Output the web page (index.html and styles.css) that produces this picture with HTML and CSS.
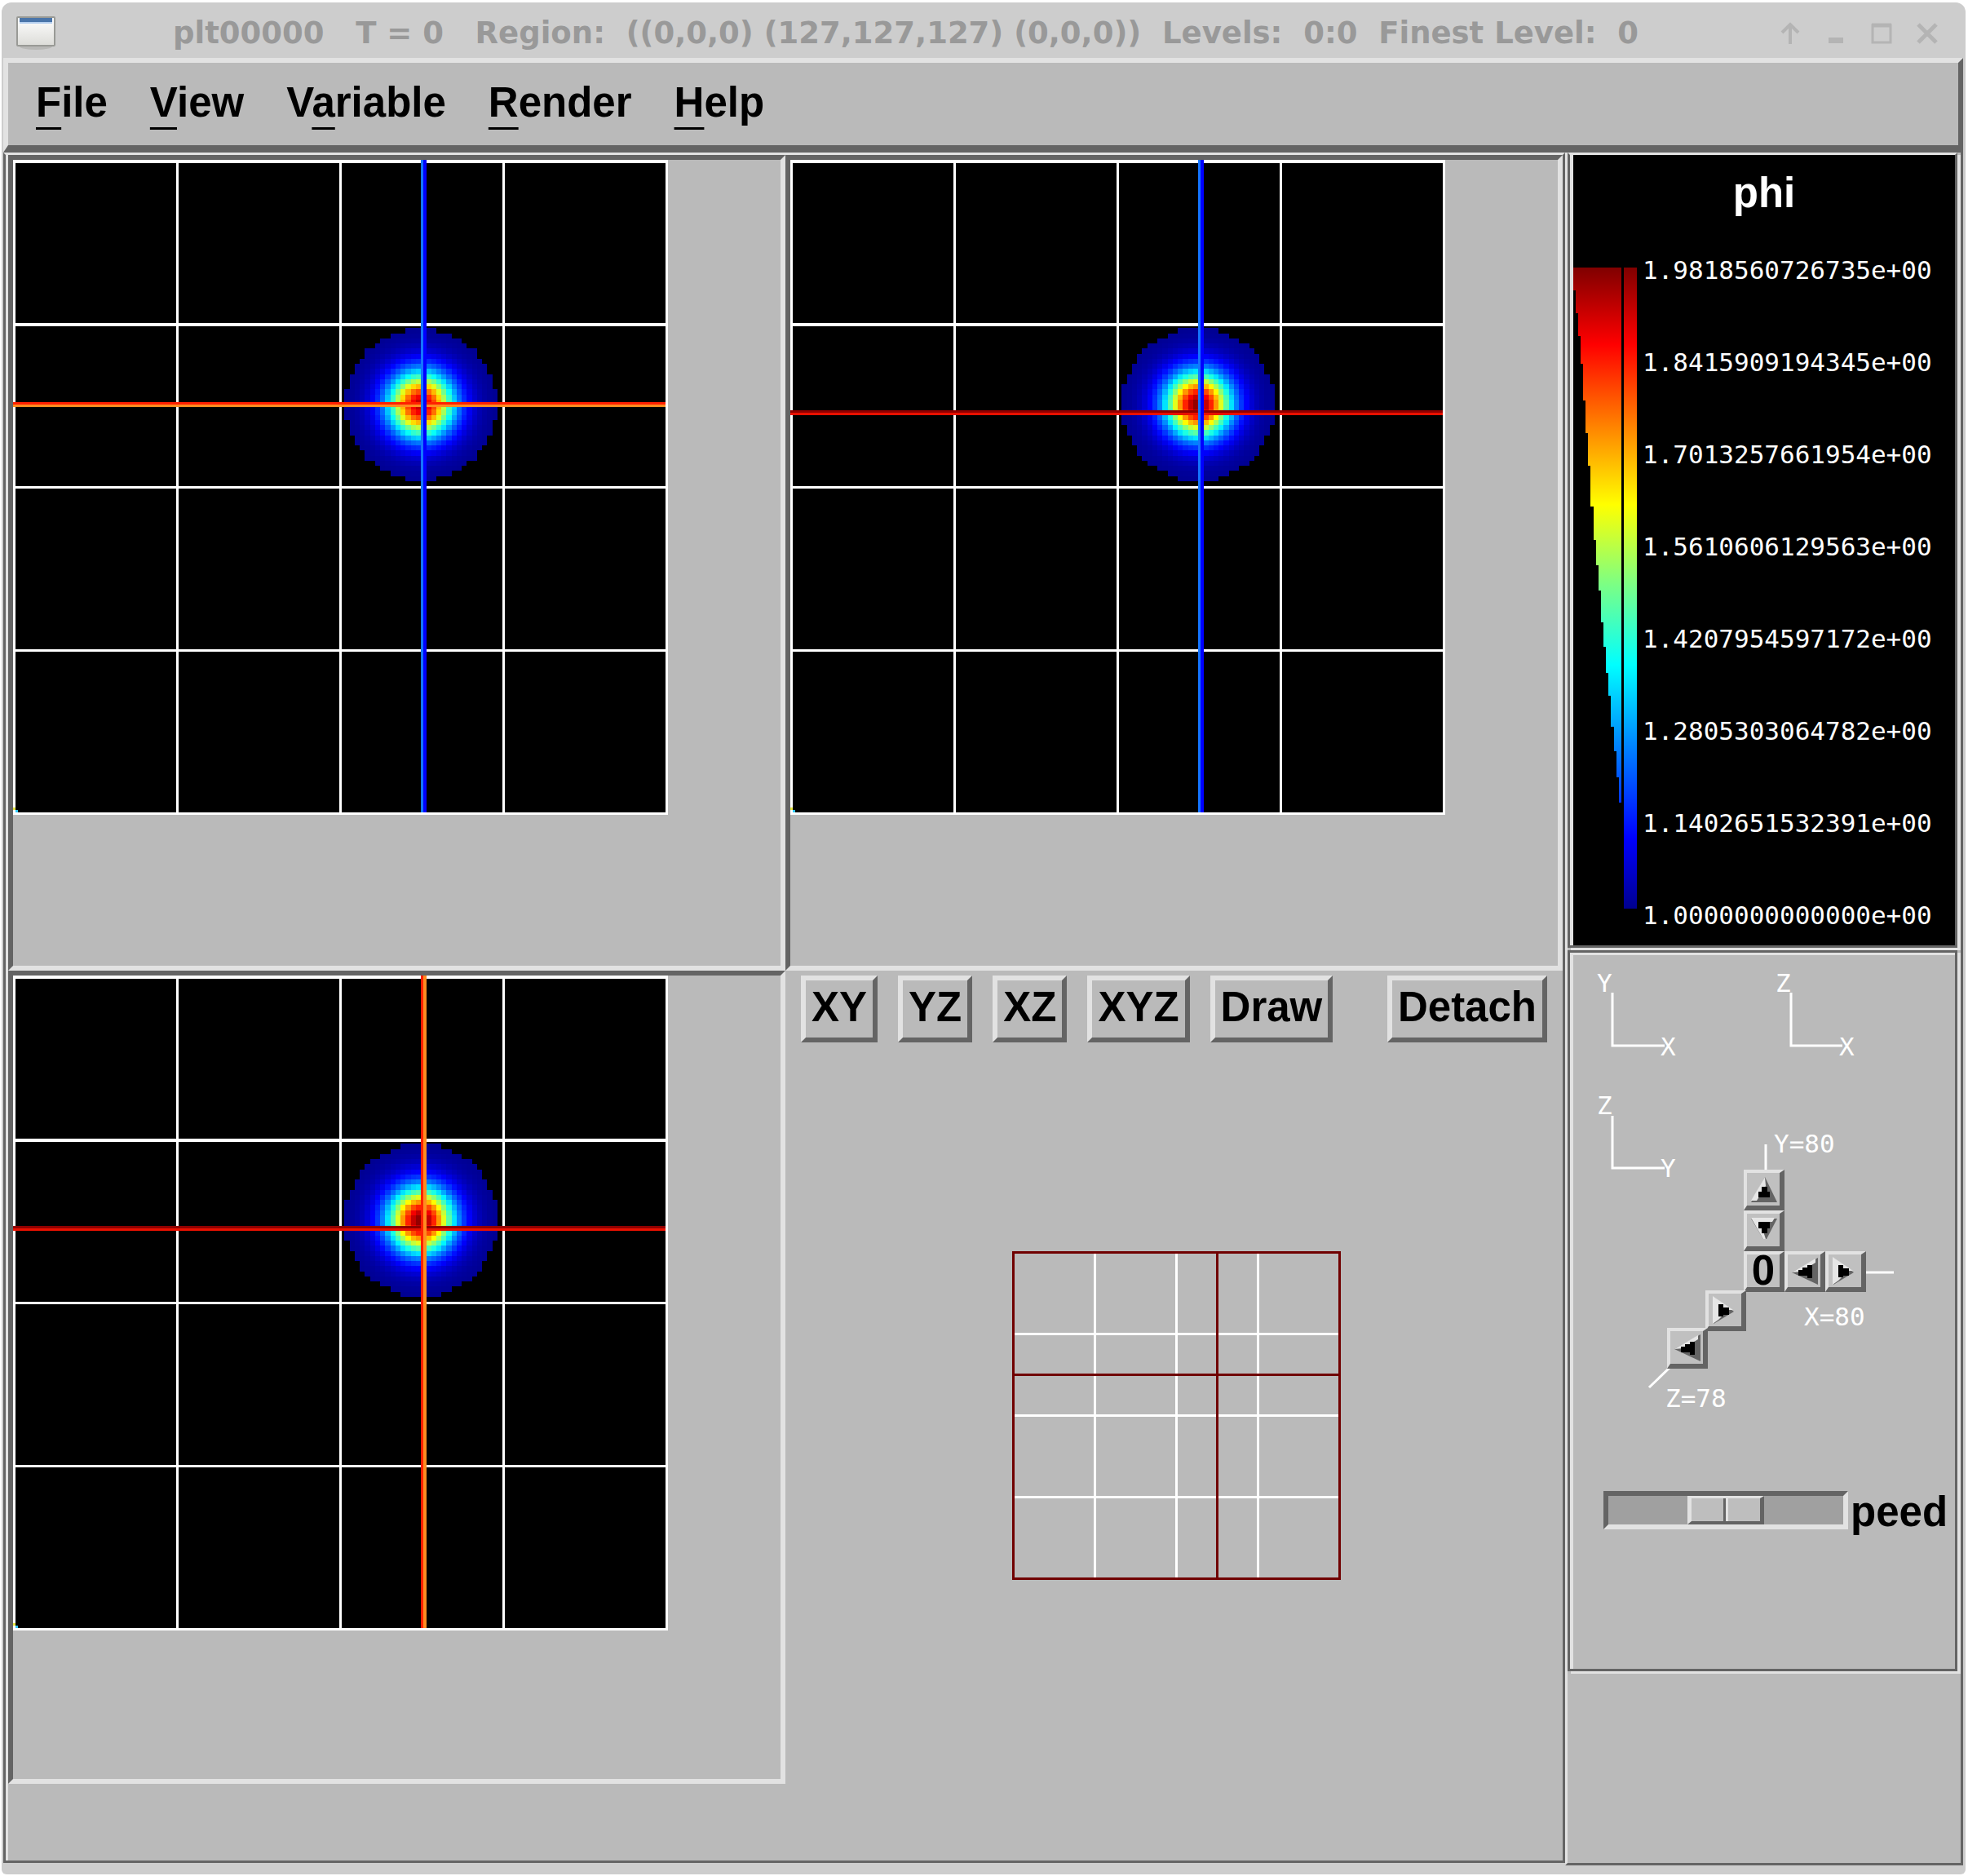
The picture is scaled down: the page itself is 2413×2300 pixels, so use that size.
FILE: index.html
```html
<!DOCTYPE html>
<html lang="en">
<head>
<meta charset="utf-8">
<title>plt00000</title>
<link rel="stylesheet" href="styles.css">
</head>
<body>
<div class="window">
  <header class="titlebar">
    <svg class="app-icon" width="48" height="42" viewBox="0 0 48 42" aria-hidden="true">
      <defs><linearGradient id="sheet" x1="0" y1="0" x2="0" y2="1"><stop offset="0" stop-color="#fff"/><stop offset="1" stop-color="#dcdcd8"/></linearGradient></defs>
      <ellipse cx="24" cy="37" rx="20" ry="4" fill="#b8b8b6"/>
      <rect x="1" y="1" width="46" height="35" rx="1" fill="url(#sheet)" stroke="#999a96" stroke-width="2"/>
      <rect x="4" y="2" width="40" height="5" fill="#4a75aa"/>
      <rect x="4" y="7" width="40" height="2" fill="#b6d0f0"/>
    </svg>
    <h1 class="title">plt00000   T = 0   Region:  ((0,0,0) (127,127,127) (0,0,0))  Levels:  0:0  Finest Level:  0</h1>
    <div class="window-buttons">
      <button class="window-button" aria-label="Shade"><svg width="28" height="28" viewBox="0 0 28 28"><path d="M14 27V3M4 13L14 3L24 13" fill="none" stroke="#b4b4b4" stroke-width="4"/></svg></button>
      <button class="window-button" aria-label="Minimize"><svg width="28" height="28" viewBox="0 0 28 28"><path d="M5 19h18v7H5z" fill="#b4b4b4"/></svg></button>
      <button class="window-button" aria-label="Maximize"><svg width="28" height="28" viewBox="0 0 28 28"><path d="M3 4h22v21H3z" fill="none" stroke="#b4b4b4" stroke-width="3"/><path d="M2 4h24" stroke="#b4b4b4" stroke-width="5"/></svg></button>
      <button class="window-button" aria-label="Close"><svg width="28" height="28" viewBox="0 0 28 28"><path d="M3 3L25 25M25 3L3 25" stroke="#b4b4b4" stroke-width="5"/></svg></button>
    </div>
  </header>

  <nav class="menubar">
    <button class="menu"><u>F</u>ile</button>
    <button class="menu"><u>V</u>iew</button>
    <button class="menu">V<u>a</u>riable</button>
    <button class="menu"><u>R</u>ender</button>
    <button class="menu"><u>H</u>elp</button>
  </nav>

  <div class="workspace">
    <main class="views">
      <section class="pane"><canvas class="slice" width="803" height="803" data-view="xy"></canvas></section>
      <section class="pane"><canvas class="slice" width="803" height="803" data-view="xz"></canvas></section>
      <section class="pane"><canvas class="slice" width="803" height="803" data-view="yz"></canvas></section>
      <section class="volume">
        <div class="toolbar">
          <button class="tool">XY</button>
          <button class="tool">YZ</button>
          <button class="tool">XZ</button>
          <button class="tool">XYZ</button>
          <button class="tool">Draw</button>
          <button class="tool detach">Detach</button>
        </div>
        <svg class="wireframe" width="403" height="403" viewBox="0 0 403 403" shape-rendering="crispEdges">
          <g fill="#fff">
            <rect x="100" width="3" height="403"/><rect x="200" width="3" height="403"/><rect x="300" width="3" height="403"/>
            <rect y="100" width="403" height="3"/><rect y="200" width="403" height="3"/><rect y="300" width="403" height="3"/>
          </g>
          <g fill="#700000">
            <rect x="250" width="3" height="403"/><rect y="150" width="403" height="3"/>
            <rect width="403" height="3"/><rect y="400" width="403" height="3"/>
            <rect width="3" height="403"/><rect x="400" width="3" height="403"/>
          </g>
        </svg>
      </section>
    </main>

    <aside class="side">
      <section class="panel legend">
        <h2 class="variable">phi</h2>
        <div class="scale">
          <svg class="palette" width="78" height="786" viewBox="0 0 78 786" shape-rendering="crispEdges">
            <defs>
              <linearGradient id="jet" gradientUnits="userSpaceOnUse" x1="0" y1="0" x2="0" y2="786">
                <stop offset="0" stop-color="#800000"/><stop offset=".12" stop-color="#f00"/>
                <stop offset=".245" stop-color="#ff8000"/><stop offset=".37" stop-color="#ff0"/>
                <stop offset=".49" stop-color="#80ff80"/><stop offset=".62" stop-color="#0ff"/>
                <stop offset=".75" stop-color="#0080ff"/><stop offset=".89" stop-color="#00f"/>
                <stop offset="1" stop-color="#00008f"/>
              </linearGradient>
            </defs>
            <path fill="url(#jet)" d="M0 0H59V656H56V625H53V593H50V563H46V525H43V497H40V465H37V435H34V396H31V365H28V334H25V293H21V243H18V203H15V163H12V118H9V84H6V56H3V28H0Z"/>
            <rect x="62" width="16" height="786" fill="url(#jet)"/>
          </svg>
          <ol class="values">
            <li>1.9818560726735e+00</li>
            <li>1.8415909194345e+00</li>
            <li>1.7013257661954e+00</li>
            <li>1.5610606129563e+00</li>
            <li>1.4207954597172e+00</li>
            <li>1.2805303064782e+00</li>
            <li>1.1402651532391e+00</li>
            <li>1.0000000000000e+00</li>
          </ol>
        </div>
      </section>

      <section class="panel controls">
        <div class="diagram">
          <svg class="axes" width="468" height="600" viewBox="0 0 468 600">
            <g fill="none" stroke="#fff" stroke-width="3">
              <path d="M48 49V114H112M267 49V114H330M48 200V264H112"/>
              <path d="M236 235V267M359 392H393M119 508L93 533"/>
            </g>
            <g class="axis-text">
              <text x="29" y="48">Y</text><text x="107" y="126">X</text>
              <text x="248" y="48">Z</text><text x="326" y="126">X</text>
              <text x="29" y="198">Z</text><text x="107" y="275">Y</text>
              <text x="246" y="245">Y=80</text>
              <text x="283" y="457">X=80</text>
              <text x="113" y="557">Z=78</text>
            </g>
          </svg>
          <button class="step y-up" aria-label="Y up"><svg width="50" height="50" viewBox="0 0 50 50"><path d="M26 9L9 40H41Z" fill="#646464"/><path d="M26 9L9 38H16L27 20Z" fill="#e6e6e6"/><path d="M22 21H29V27H32V34H18V27H22Z"/></svg></button>
          <button class="step y-down" aria-label="Y down"><svg width="50" height="50" viewBox="0 0 50 50"><path d="M9 10H41L28 35H24Z" fill="#646464"/><path d="M9 9H38L35 14H20L27 35H24Z" fill="#e6e6e6"/><path d="M18 14H32V22H29V28H22V22H18Z"/></svg></button>
          <button class="step origin">0</button>
          <button class="step x-down" aria-label="X down"><svg width="50" height="50" viewBox="0 0 50 50"><path d="M9 26L41 8V41Z" fill="#646464"/><path d="M9 26L38 9V14L20 25Z" fill="#e6e6e6"/><path d="M17 23H22V20H28V17H34V33H28V30H17Z"/></svg></button>
          <button class="step x-up" aria-label="X up"><svg width="50" height="50" viewBox="0 0 50 50"><path d="M10 8L35 26L10 41Z" fill="#646464"/><path d="M9 7L34 24L28 24L16 36L9 41Z" fill="#e6e6e6"/><path d="M16 17H22V21H29V30H22V32H16Z"/></svg></button>
          <button class="step z-up" aria-label="Z up"><svg width="50" height="50" viewBox="0 0 50 50"><path d="M10 8L35 26L10 41Z" fill="#646464"/><path d="M9 7L34 24L28 24L16 36L9 41Z" fill="#e6e6e6"/><path d="M16 17H22V21H29V30H22V32H16Z"/></svg></button>
          <button class="step z-down" aria-label="Z down"><svg width="50" height="50" viewBox="0 0 50 50"><path d="M9 26L41 8V41Z" fill="#646464"/><path d="M9 26L38 9V14L20 25Z" fill="#e6e6e6"/><path d="M17 23H22V20H28V17H34V33H28V30H17Z"/></svg></button>
        </div>
        <div class="speed">
          <input class="slider" id="speed" type="range" min="0" max="100" value="50">
          <label class="speed-label" for="speed">peed</label>
        </div>
      </section>
    </aside>
  </div>
</div>
<script src="slices.js"></script>
</body>
</html>
```
FILE: styles.css
```css
* { box-sizing: border-box; }

:root {
  --face: #bababa;
  --light: #e2e2e2;
  --dark: #646464;
  --frame: #cdcdcd;
}

body {
  margin: 0;
  background: #fff;
  font-family: "Liberation Sans", Arial, sans-serif;
  color: #000;
}

button {
  margin: 0;
  padding: 0;
  border: 0;
  background: none;
  color: inherit;
  font: inherit;
}

.window {
  display: flex;
  flex-direction: column;
  min-height: calc(100vh - 5px);
  margin: 3px 3px 2px 2px;
  padding: 0 3px 11px 2px;
  border-radius: 12px 12px 6px 6px;
  background: var(--frame);
}

.titlebar {
  display: flex;
  align-items: center;
  height: 68px;
  padding: 8px 30px 0 16px;
}

.title {
  margin: 0 0 0 144px;
  font: bold 37px/60px "DejaVu Sans", sans-serif;
  color: #999;
  white-space: pre;
}

.window-buttons {
  display: flex;
  gap: 28px;
  margin-left: auto;
}

.window-button { display: flex; }

.menubar {
  display: flex;
  gap: 52px;
  padding: 18px 34px 22px;
  border: 6px solid;
  border-color: var(--light) var(--dark) var(--dark) var(--light);
  border-bottom-width: 9px;
  background: var(--face);
}

.menu {
  font-size: 51px;
  font-weight: bold;
  line-height: 61px;
}

.menu u {
  text-decoration-thickness: 3px;
  text-underline-offset: 13px;
  text-decoration-skip-ink: none;
}

.workspace {
  display: grid;
  grid-template-columns: minmax(0, 1fr) 488px;
  flex: 1;
}

.views {
  display: grid;
  grid-template-columns: 1fr 1fr;
  grid-template-rows: 1000px auto;
  align-content: start;
  margin-bottom: 3px;
  border: 3px solid var(--dark);
  border-top-color: var(--light);
  box-shadow: inset 3px 0 var(--light);
  padding-left: 3px;
  background: var(--face);
}

.pane {
  border: 6px solid;
  border-color: var(--dark) var(--light) var(--light) var(--dark);
  padding-bottom: 182px;
}

.slice { display: block; }

.volume { padding-left: 6px; }

.toolbar {
  display: flex;
  gap: 25px;
  padding: 6px 19px 0 13px;
}

.tool {
  height: 82px;
  padding: 0 7px 4px;
  border: 6px solid;
  border-color: var(--light) var(--dark) var(--dark) var(--light);
  font-size: 51px;
  font-weight: bold;
  line-height: 66px;
}

.detach { margin-left: auto; }

.wireframe {
  display: block;
  margin: 256px auto 0;
}

.side {
  border: 3px solid;
  border-top: 0;
  border-color: var(--light) var(--dark) var(--dark) var(--light);
  padding-right: 4px;
  background: var(--face);
}

.panel {
  border: 3px solid var(--dark);
  box-shadow: 4px 3px var(--light), inset 4px 3px var(--light);
  padding-left: 4px;
}

.legend {
  height: 975px;
  margin-bottom: 3px;
  border-top-color: var(--light);
  background: #000;
  box-shadow: 4px 3px var(--light), inset 4px 0 var(--light);
  color: #fff;
}

.variable {
  margin: 0;
  padding-top: 16px;
  font-size: 51px;
  line-height: 61px;
  text-align: center;
}

.scale {
  display: flex;
  gap: 7px;
  margin-top: 40px;
}

.palette { margin-top: 21px; }

.values {
  display: grid;
  grid-auto-rows: 113px;
  margin: 0;
  padding: 0;
  list-style: none;
  font: 31px/48px "DejaVu Sans Mono", monospace;
}

.controls { height: 884px; }

.diagram {
  position: relative;
  height: 600px;
}

.axes { display: block; }

.axis-text {
  fill: #fff;
  font: 31px "DejaVu Sans Mono", monospace;
}

/* The step buttons sit on the drawn axes. */
.step {
  position: absolute;
  width: 50px;
  height: 50px;
  border: solid;
  border-width: 4px 6px 6px 4px;
  border-color: var(--light) var(--dark) var(--dark) var(--light);
  background: #c0c0c0;
  font-size: 51px;
  font-weight: bold;
  line-height: 40px;
}

.step svg {
  display: block;
  margin: -4px;
}

.y-up { left: 209px; top: 266px; }
.y-down { left: 209px; top: 316px; }
.origin { left: 209px; top: 366px; }
.x-down { left: 259px; top: 366px; }
.x-up { left: 309px; top: 366px; }
.z-up { left: 162px; top: 414px; }
.z-down { left: 115px; top: 460px; }

.speed {
  display: flex;
  gap: 3px;
  padding: 60px 0 0 37px;
}

.slider {
  width: 300px;
  height: 47px;
  margin: 0;
  appearance: none;
  border: 6px solid;
  border-color: var(--dark) var(--light) var(--light) var(--dark);
  background: #a0a0a0;
}

.slider::-webkit-slider-thumb {
  appearance: none;
  width: 94px;
  height: 35px;
  border: solid;
  border-width: 3px 5px 4px 5px;
  border-color: var(--light) var(--dark) var(--dark) var(--light);
  background: linear-gradient(90deg, #bebebe 39px, var(--dark) 39px 42px, var(--light) 42px 45px, #bebebe 45px);
}

.speed-label {
  font-size: 51px;
  font-weight: bold;
  line-height: 52px;
}
```
FILE: slices.js
```js
// Colour map stops, from the lowest value to the highest.
const stops = [
  [0, 0, 0, 143], [0.11, 0, 0, 255], [0.25, 0, 128, 255], [0.38, 0, 255, 255],
  [0.51, 128, 255, 128], [0.63, 255, 255, 0], [0.755, 255, 128, 0],
  [0.88, 255, 0, 0], [1, 128, 0, 0]
];

function colour(f) {
  let i = 1;
  while (i < stops.length - 1 && f > stops[i][0]) i++;
  const a = stops[i - 1], b = stops[i];
  const t = Math.min(1, (f - a[0]) / (b[0] - a[0]));
  return "rgb(" + [1, 2, 3].map(k => Math.round(a[k] + (b[k] - a[k]) * t)).join(",") + ")";
}

// depth: distance of the slice from the centre of the blob, in cells.
const views = {
  xy: { depth: 1.5, column: ["#1474ff", "#0000ff"], row: ["#ff2000", "#ff8c20"], y: 297 },
  xz: { depth: 0.5, column: ["#1474ff", "#0000ff"], row: ["#900000", "#e81000"], y: 307 },
  yz: { depth: 0.5, column: ["#ff2000", "#ff8c20"], row: ["#900000", "#e81000"], y: 307 }
};

for (const canvas of document.querySelectorAll(".slice")) {
  const view = views[canvas.dataset.view];
  const g = canvas.getContext("2d");
  const box = (fill, x, y, w, h) => { g.fillStyle = fill; g.fillRect(x, y, w, h); };
  box("#000", 0, 0, 803, 803);

  for (let i = -16; i < 16; i++) {
    for (let j = -16; j < 16; j++) {
      const r2 = (i + 0.5) ** 2 + (j + 0.5) ** 2 + view.depth ** 2;
      const f = Math.exp(-r2 / 40.96);
      if (f < 0.0042) continue;
      const x = Math.round(500 + i * 6.25), y = Math.round(300 + j * 6.25);
      box(colour(f), x, y, Math.round(500 + (i + 1) * 6.25) - x, Math.round(300 + (j + 1) * 6.25) - y);
    }
  }

  for (let k = 0; k <= 800; k += 200) {
    box("#fff", k, 0, 3, 803);
    box("#fff", 0, k, 803, k < 400 ? 4 : 3);
  }
  box(view.row[0], 0, view.y, 800, 3);
  box(view.row[1], 0, view.y + 3, 800, 3);
  box(view.column[0], 500, 0, 3, 800);
  box(view.column[1], 503, 0, 4, 800);
  box("#30c8ff", 3, 797, 3, 3);
  box("#e8e840", 0, 794, 3, 3);
}
```
